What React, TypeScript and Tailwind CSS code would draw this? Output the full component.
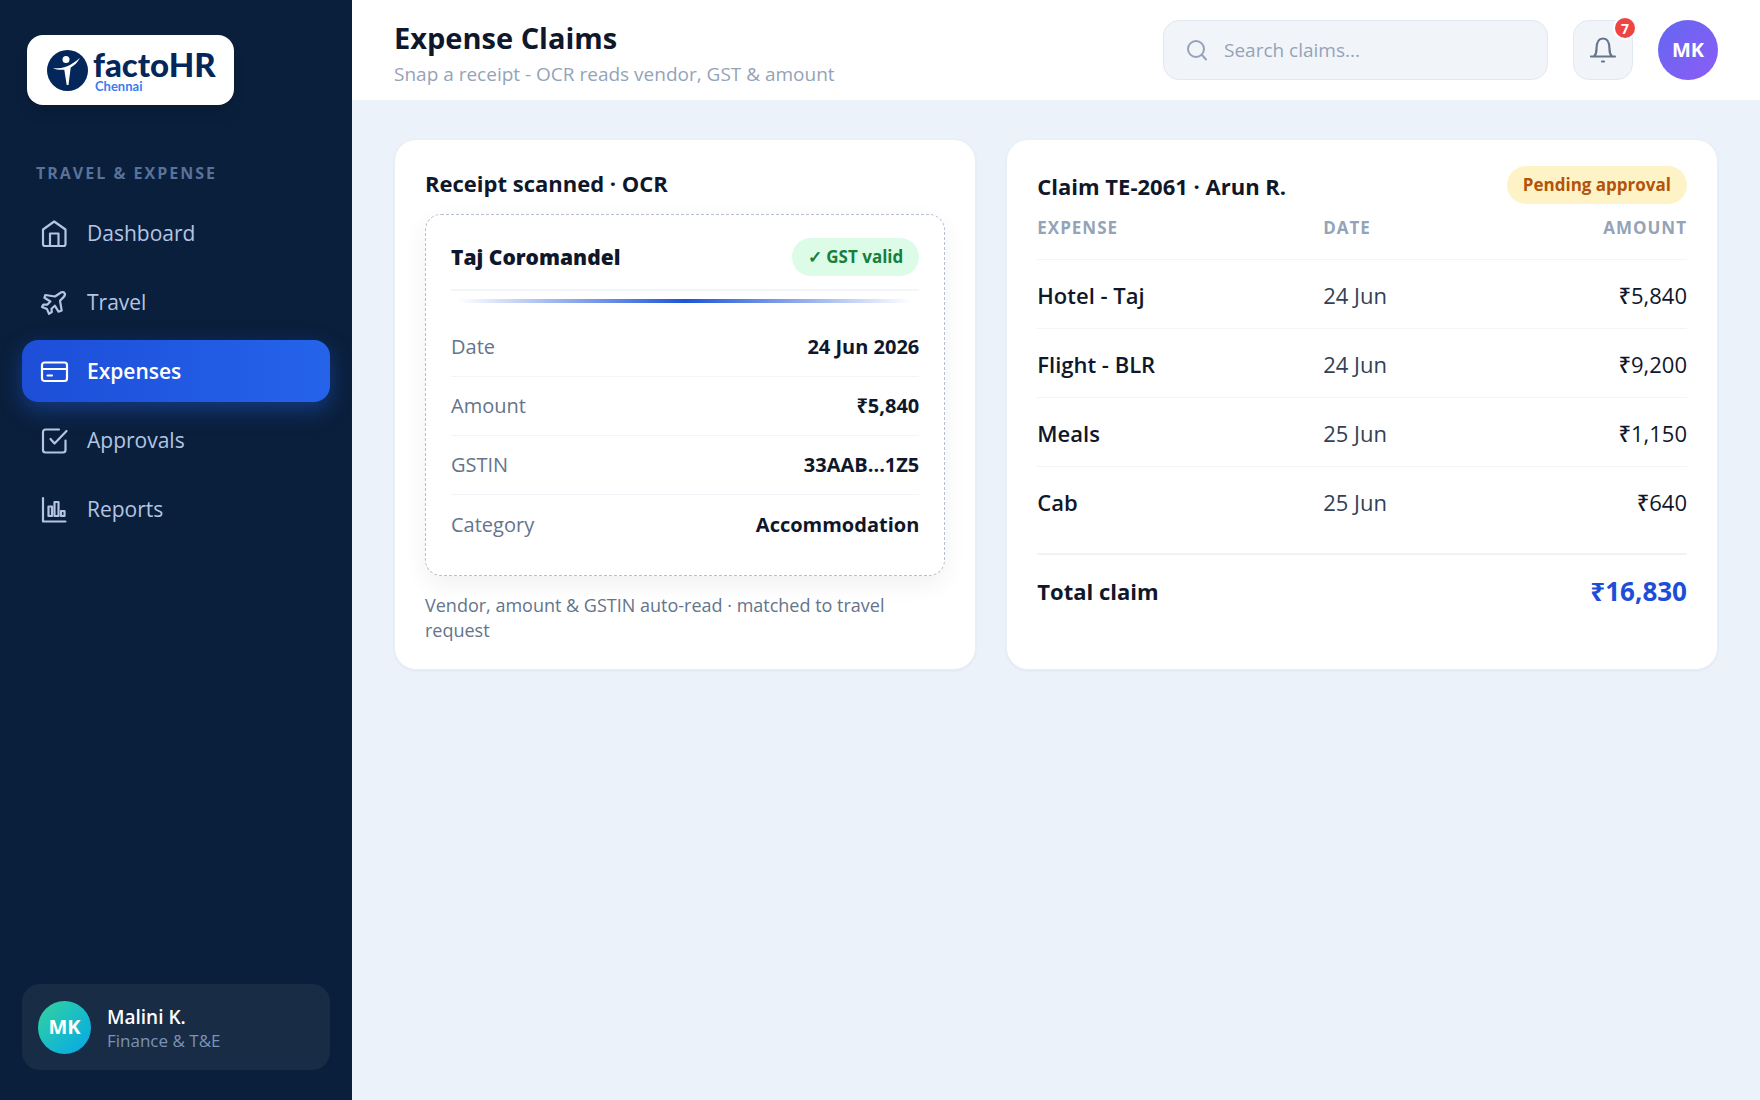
const navItems = [
  { label: 'Dashboard', icon: 'home' },
  { label: 'Travel', icon: 'plane' },
  { label: 'Expenses', icon: 'card' },
  { label: 'Approvals', icon: 'check' },
  { label: 'Reports', icon: 'chart' },
];

const receiptRows = [
  { label: 'Date', value: '24 Jun 2026' },
  { label: 'Amount', value: '₹5,840' },
  { label: 'GSTIN', value: '33AAB...1Z5' },
  { label: 'Category', value: 'Accommodation' },
];

const expenses = [
  { name: 'Hotel - Taj', date: '24 Jun', amount: '₹5,840' },
  { name: 'Flight - BLR', date: '24 Jun', amount: '₹9,200' },
  { name: 'Meals', date: '25 Jun', amount: '₹1,150' },
  { name: 'Cab', date: '25 Jun', amount: '₹640' },
];

const NavIcon: React.FC<{ name: string }> = ({ name }) => (
  <svg
    className="size-8 shrink-0"
    viewBox="0 0 32 32"
    fill="none"
    stroke="currentColor"
    strokeWidth="2.2"
    strokeLinecap="round"
    strokeLinejoin="round"
    aria-hidden="true"
  >
    {name === 'home' && (
      <>
        <path d="M16.200 3.500 5 11.500V26a2 2 0 0 0 2 2h18.500a2 2 0 0 0 2-2V11.500Z" />
        <path d="M12 28V15.500h8.500V28" />
      </>
    )}
    {name === 'plane' && (
      <path d="M21.500 6.500c1.700-1.600 4-1.700 4.800-.8.900.9.600 3-1 4.700L22 13.700l1.700 9.800-3.200 1.200-3.700-6-3.300 3 .3 3.300-2.800 1.800-2-4.700-5-2.200 1.400-2.400 3.800.2 3.200-3.200-6-3.700.9-2.800 9.700 1.500Z" />
    )}
    {name === 'card' && (
      <>
        <rect x="4" y="6.500" width="25" height="18.500" rx="2.500" />
        <path d="M4 13h25M9.500 19.500h4.500" />
      </>
    )}
    {name === 'check' && (
      <>
        <path d="M21 4.500H7.500A2.500 2.500 0 0 0 5 7v18a2.500 2.500 0 0 0 2.500 2.500h17.500A2.500 2.500 0 0 0 27.500 25v-9.500" />
        <path d="m12.500 14 4 4.500L28.500 6" />
      </>
    )}
    {name === 'chart' && (
      <path d="M5 4v23.500h22.500M10.500 12.500h3.500v9.500h-3.500zM16.500 8h4v14h-4zM23 17h3.500v5H23z" />
    )}
  </svg>
);

const Logo: React.FC = () => (
  <div className="ml-[5px] flex h-[70px] w-[207px] items-center gap-[5px] rounded-2xl bg-white px-5 shadow-lg">
    <svg className="size-[41px] shrink-0" viewBox="0 0 41 41" aria-hidden="true">
      <circle cx="20.500" cy="20.500" r="20.500" fill="#03265b" />
      <circle cx="19" cy="9.500" r="3.500" fill="#fff" />
      <path d="M6 18.300c9 .4 17.500-1.800 27-10.600-2.500 4.800-5.500 7.800-9.300 9.800L21.500 35h-1.800l-2.400-15.300c-4 .3-7.600.2-11.300-1.400Z" fill="#fff" />
    </svg>
    <div className="font-[Lato,sans-serif]">
      <div className="text-[33px] leading-[31px] font-black text-[#03265b]">factoHR</div>
      <div className="pl-0.5 text-[13px] leading-3 font-bold text-[#3b7cf0]">Chennai</div>
    </div>
  </div>
);

const Sidebar: React.FC = () => (
  <aside className="flex w-[352px] shrink-0 flex-col bg-[#0a1f3b] px-[22px] pt-[35px] pb-[30px]">
    <Logo />
    <div className="mt-14 px-3.5 text-[16px] leading-6 font-bold tracking-[2px] text-[#5a7199]">TRAVEL &amp; EXPENSE</div>
    <nav className="mt-[17px] flex flex-col gap-[7px]">
      {navItems.map((item) => (
        <a
          key={item.label}
          href="#"
          className={`flex h-[62px] items-center gap-[17px] rounded-2xl px-4 pt-0.5 text-[21px] ${
            item.label === 'Expenses'
              ? 'bg-linear-to-r from-[#1d4ed8] to-[#2563eb] font-semibold text-white shadow-[0_8px_22px_rgba(37,99,235,0.4)]'
              : 'font-medium text-[#b3c5e3]'
          }`}
        >
          <NavIcon name={item.icon} />
          {item.label}
        </a>
      ))}
    </nav>
    <div className="mt-auto flex h-[86px] items-center gap-4 rounded-[18px] bg-white/6 px-4">
      <div className="flex size-[53px] items-center justify-center rounded-full bg-linear-to-br from-[#34d399] to-[#0ea5e9] text-[20px] font-bold text-white">
        MK
      </div>
      <div className="pt-1">
        <div className="text-[19px] leading-6 font-semibold text-white">Malini K.</div>
        <div className="text-[17px] leading-6 text-[#7c93b8]">Finance &amp; T&amp;E</div>
      </div>
    </div>
  </aside>
);

const Header: React.FC = () => (
  <header className="flex h-[100px] items-center gap-[25px] bg-white px-[42px]">
    <div className="mr-auto pt-2">
      <h1 className="text-[29px] leading-10 font-bold text-[#0f172a]">Expense Claims</h1>
      <p className="text-[19px] leading-8 font-medium text-[#94a3b8]">Snap a receipt - OCR reads vendor, GST &amp; amount</p>
    </div>
    <label className="flex h-[60px] w-[385px] items-center gap-4 rounded-2xl border border-[#e2e8f0] bg-[#f1f5f9] px-[22px]">
      <svg className="size-[22px] shrink-0 text-[#94a3b8]" viewBox="0 0 22 22" fill="none" stroke="currentColor" strokeWidth="2" strokeLinecap="round" aria-hidden="true">
        <circle cx="10" cy="10" r="8" />
        <path d="m16 16 4 4.500" />
      </svg>
      <input
        type="text"
        aria-label="Search claims"
        placeholder="Search claims..."
        className="w-full bg-transparent text-[19px] text-[#0f172a] outline-none placeholder:text-[#94a3b8]"
      />
    </label>
    <button type="button" aria-label="Notifications" className="relative flex size-[60px] items-center justify-center rounded-2xl border border-[#e2e8f0] bg-[#f1f5f9] text-[#64748b]">
      <svg className="size-8" viewBox="0 0 32 32" fill="none" stroke="currentColor" strokeWidth="2.2" strokeLinecap="round" strokeLinejoin="round" aria-hidden="true">
        <path d="M4 22.500h24M7 22.500c2-2 2.500-4.500 2.500-7.500 0-6 1.500-10.500 6.500-10.500s6.500 4.500 6.500 10.500c0 3 .5 5.500 2.500 7.500M15 27.500h2" />
      </svg>
      <span className="absolute -top-[5px] -right-[5px] flex size-6 items-center justify-center rounded-full border-2 border-white bg-[#ef4444] text-[14px] font-bold text-white">7</span>
    </button>
    <div className="flex size-[60px] items-center justify-center rounded-full bg-linear-to-br from-[#6366f1] to-[#8b5cf6] text-[20px] font-bold text-white">
      MK
    </div>
  </header>
);

const ReceiptCard: React.FC = () => (
  <section className="rounded-[22px] border border-[#e8eff6] bg-white px-[30px] pt-[27px] pb-[26px] shadow-[0_1px_3px_rgba(15,23,42,0.05)]">
    <h2 className="text-[22px] leading-8 font-bold text-[#0f172a]">Receipt scanned · OCR</h2>
    <div className="mt-[15px] rounded-2xl border border-dashed border-[#b6c0cc] px-[25px] pt-[23px] pb-[21px] shadow-[0_8px_24px_rgba(15,23,42,0.06)]">
      <div className="flex items-center justify-between border-b-2 border-[#f3f6f9] pb-[13px]">
        <h3 className="text-[21px] leading-8 font-extrabold text-[#0f172a]">Taj Coromandel</h3>
        <span className="flex h-[38px] items-center rounded-full bg-[#dcfce7] px-4 text-[17px] font-bold text-[#15803d]">✓ GST valid</span>
      </div>
      <div className="mx-2 mt-2 h-1 bg-linear-to-r from-transparent via-[#1d55d8] to-transparent" />
      <dl className="mt-[15px]">
        {receiptRows.map((row) => (
          <div key={row.label} className="flex h-[59px] items-center justify-between border-b border-[#f1f5f9] text-[20px] last:border-0">
            <dt className="text-[#64748b]">{row.label}</dt>
            <dd className="font-bold text-[#0f172a]">{row.value}</dd>
          </div>
        ))}
      </dl>
    </div>
    <p className="mt-[17px] text-[18px] leading-[25px] font-medium text-[#64748b]">
      Vendor, amount &amp; GSTIN auto-read · matched to travel request
    </p>
  </section>
);

const ClaimCard: React.FC = () => (
  <section className="rounded-[22px] border border-[#e8eff6] bg-white px-[30px] pt-[26px] pb-7 shadow-[0_1px_3px_rgba(15,23,42,0.05)]">
    <div className="flex items-end justify-between">
      <h2 className="text-[22px] leading-9 font-bold text-[#0f172a]">Claim TE-2061 · Arun R.</h2>
      <span className="flex h-[38px] items-center rounded-full bg-[#fef3c7] px-4 text-[17px] font-bold text-[#b45309]">Pending approval</span>
    </div>
    <table className="w-full table-fixed text-left text-[22px]">
      <thead>
        <tr className="h-[55px] border-b border-[#f1f5f9] align-top text-[17px] leading-6 text-[#94a3b8]">
          <th className="w-[44%] pt-3 font-bold tracking-[1px]">EXPENSE</th>
          <th className="pt-3 font-bold tracking-[1px]">DATE</th>
          <th className="pt-3 text-right font-bold tracking-[1px]">AMOUNT</th>
        </tr>
      </thead>
      <tbody>
        {expenses.map((item) => (
          <tr key={item.name} className="h-[69px] border-b border-[#f1f5f9] last:border-0">
            <td className="pt-1 font-semibold text-[#0f172a]">{item.name}</td>
            <td className="pt-1 text-[#334155]">{item.date}</td>
            <td className="pt-1 text-right font-medium text-[#0f172a]">{item.amount}</td>
          </tr>
        ))}
      </tbody>
    </table>
    <div className="mt-[18px] flex items-center justify-between border-t-2 border-[#eff3f7] pt-4">
      <span className="text-[22px] font-bold text-[#0f172a]">Total claim</span>
      <span className="text-[26px] leading-10 font-bold text-[#1d4ed8]">₹16,830</span>
    </div>
  </section>
);

export default function App() {
  return (
    <div className="flex min-h-screen bg-[#ebf2fa] font-['Open_Sans','Noto_Sans',sans-serif]">
      <Sidebar />
      <div className="min-w-0 flex-1">
        <Header />
        <main className="grid grid-cols-[minmax(0,9fr)_minmax(0,11fr)] gap-[30px] px-[42px] pt-[39px]">
          <ReceiptCard />
          <ClaimCard />
        </main>
      </div>
    </div>
  );
}
